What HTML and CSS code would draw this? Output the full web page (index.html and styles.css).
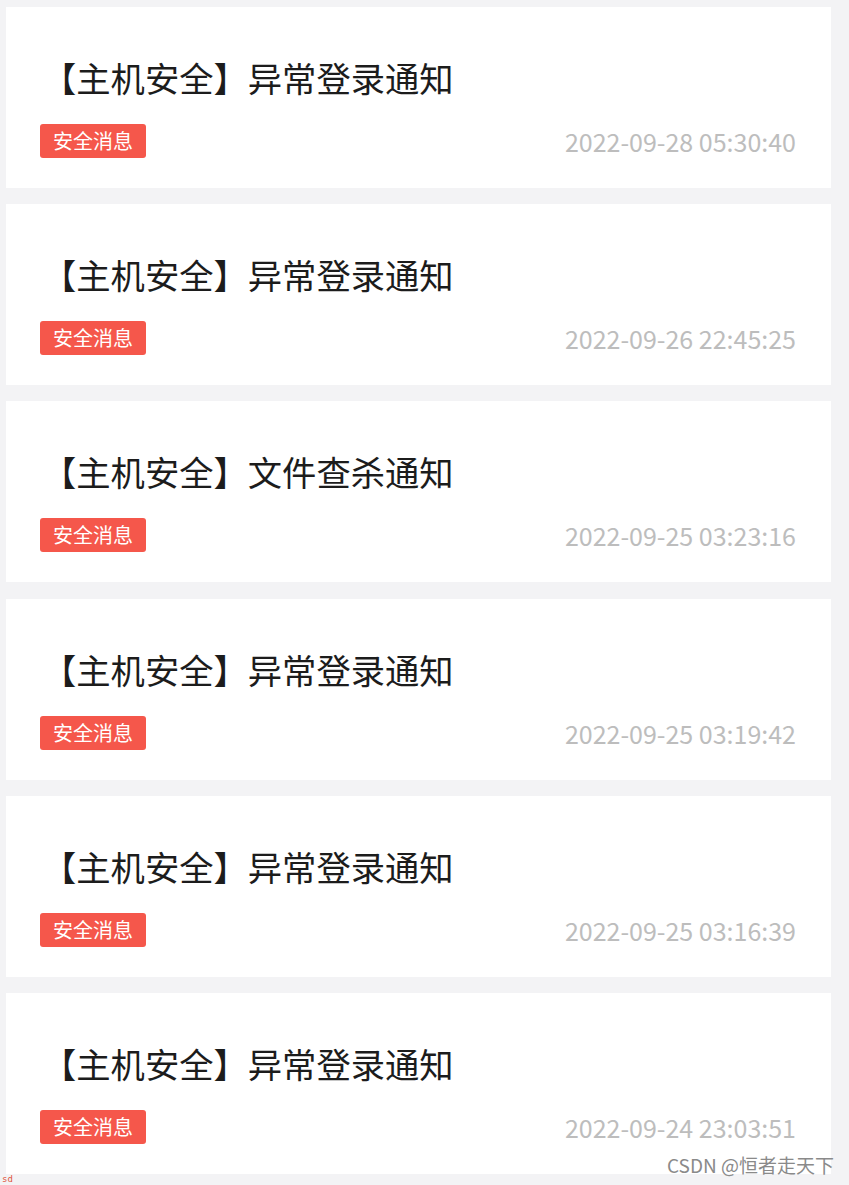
FILE: index.html
```html
<!DOCTYPE html>
<html>
    <head>
        <meta charset="utf-8">
        <title>消息通知</title>
        <link rel="stylesheet" href="styles.css">
    </head>
    <body>
        <div id="list">
            <div class="msgCard">
                <div class="msgTitle">【主机安全】异常登录通知</div>
                <div class="msgRow">
                    <span class="tag">安全消息</span>
                    <span class="msgTime">2022-09-28 05:30:40</span>
                </div>
            </div>
            <div class="msgCard">
                <div class="msgTitle">【主机安全】异常登录通知</div>
                <div class="msgRow">
                    <span class="tag">安全消息</span>
                    <span class="msgTime">2022-09-26 22:45:25</span>
                </div>
            </div>
            <div class="msgCard">
                <div class="msgTitle">【主机安全】文件查杀通知</div>
                <div class="msgRow">
                    <span class="tag">安全消息</span>
                    <span class="msgTime">2022-09-25 03:23:16</span>
                </div>
            </div>
            <div class="msgCard">
                <div class="msgTitle">【主机安全】异常登录通知</div>
                <div class="msgRow">
                    <span class="tag">安全消息</span>
                    <span class="msgTime">2022-09-25 03:19:42</span>
                </div>
            </div>
            <div class="msgCard">
                <div class="msgTitle">【主机安全】异常登录通知</div>
                <div class="msgRow">
                    <span class="tag">安全消息</span>
                    <span class="msgTime">2022-09-25 03:16:39</span>
                </div>
            </div>
            <div class="msgCard">
                <div class="msgTitle">【主机安全】异常登录通知</div>
                <div class="msgRow">
                    <span class="tag">安全消息</span>
                    <span class="msgTime">2022-09-24 23:03:51</span>
                </div>
            </div>
        </div>
        <div id="watermark">CSDN @恒者走天下</div>
        <div id="corner">sd</div>
    </body>
</html>
```

FILE: styles.css
```css
body,html{
    margin:0px;
    padding:0px;
}
body{
    background:#f3f3f5;
    font-family:"Noto Sans CJK SC","Noto Sans",sans-serif;
    height:1185px;
    overflow:hidden;
    position:relative;
}
#list{
    display:flex;
    flex-direction:column;
    gap:16.2px;
    padding:7px 18px 0px 6px;
}
.msgCard{
    background:#ffffff;
    height:181px;
    box-sizing:border-box;
    padding:46px 35px 0px 34px;
}
.msgTitle{
    font-size:34.3px;
    line-height:48px;
    color:#1c1c1c;
    margin-left:2px;
}
.msgRow{
    display:flex;
    align-items:center;
    justify-content:space-between;
    margin-top:23px;
}
.tag{
    background:#f5574b;
    color:#ffffff;
    font-size:20px;
    line-height:34px;
    height:34px;
    padding:0px 13px;
    border-radius:3px;
}
.msgTime{
    color:#bdbdbd;
    font-size:25px;
    line-height:34px;
}
#watermark{
    position:absolute;
    right:15px;
    top:1152px;
    font-size:19px;
    line-height:26px;
    color:#8a8a8a;
}
#corner{
    position:absolute;
    left:2px;
    top:1174px;
    font-size:9px;
    line-height:10px;
    color:#e0563e;
    font-family:"DejaVu Sans Mono",monospace;
}
```
